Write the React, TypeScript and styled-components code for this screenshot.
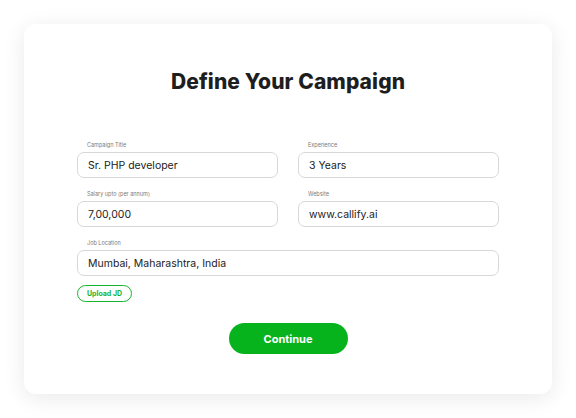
import React from "react";
import styled, { createGlobalStyle } from "styled-components";

const Global = createGlobalStyle`
  html, body { margin: 0; padding: 0; background: #ffffff; }
  body { font-family: "Poppins", Inter, "Noto Sans", sans-serif; }
  * { box-sizing: border-box; }
`;

const Page = styled.div`
  width: 576px;
  height: 418px;
  padding: 24px;
`;

const Card = styled.div`
  width: 528px;
  height: 370px;
  background: #fff;
  border-radius: 12px;
  box-shadow: 0 4px 22px rgba(0, 0, 0, 0.09);
  padding: 46px 53px 0;
  display: flex;
  flex-direction: column;
  align-items: stretch;
`;

const Title = styled.h1`
  margin: 0;
  text-align: center;
  font-family: Inter, "Noto Sans", sans-serif;
  font-weight: 800;
  font-size: 21px;
  line-height: 24px;
  color: #1e1e1e;
  letter-spacing: 0.1px;
`;

const Form = styled.div`
  margin-top: 47px;
  display: grid;
  grid-template-columns: 1fr 1fr;
  column-gap: 20px;
  row-gap: 12px;
`;

const Field = styled.label<{ $wide?: boolean }>`
  display: flex;
  flex-direction: column;
  grid-column: ${(p) => (p.$wide ? "1 / -1" : "auto")};
`;

const Label = styled.span`
  font-family: Inter, "Noto Sans", sans-serif;
  font-size: 5.5px;
  line-height: 8px;
  color: #7a7a7a;
  padding-left: 10px;
  margin-bottom: 3px;
`;

const Input = styled.div`
  height: 26px;
  border: 1px solid #d8d8d8;
  border-radius: 7px;
  padding: 0 10px;
  display: flex;
  align-items: center;
  font-family: Inter, "Noto Sans", sans-serif;
  font-size: 10.5px;
  color: #222;
`;

const UploadButton = styled.button`
  align-self: flex-start;
  margin-top: 9px;
  width: 55px;
  height: 17px;
  border: 1px solid #16b52c;
  border-radius: 9px;
  background: #fff;
  color: #16b52c;
  font-family: Inter, "Noto Sans", sans-serif;
  font-weight: 700;
  font-size: 7px;
  padding: 0;
`;

const Continue = styled.button`
  align-self: center;
  margin-top: 21px;
  width: 119px;
  height: 31px;
  border: none;
  border-radius: 16px;
  background: #07b31d;
  color: #fff;
  font-family: Inter, "Noto Sans", sans-serif;
  font-weight: 700;
  font-size: 11px;
  padding: 0;
`;

const fields = [
  { label: "Campaign Title", value: "Sr. PHP developer" },
  { label: "Experience", value: "3 Years" },
  { label: "Salary upto (per annum)", value: "7,00,000" },
  { label: "Website", value: "www.callify.ai" },
  { label: "Job Location", value: "Mumbai, Maharashtra, India", wide: true },
];

export default function App() {
  return (
    <>
      <Global />
      <Page>
        <Card>
          <Title>Define Your Campaign</Title>
          <Form>
            {fields.map((f) => (
              <Field key={f.label} $wide={f.wide}>
                <Label>{f.label}</Label>
                <Input>{f.value}</Input>
              </Field>
            ))}
          </Form>
          <UploadButton>Upload JD</UploadButton>
          <Continue>Continue</Continue>
        </Card>
      </Page>
    </>
  );
}
